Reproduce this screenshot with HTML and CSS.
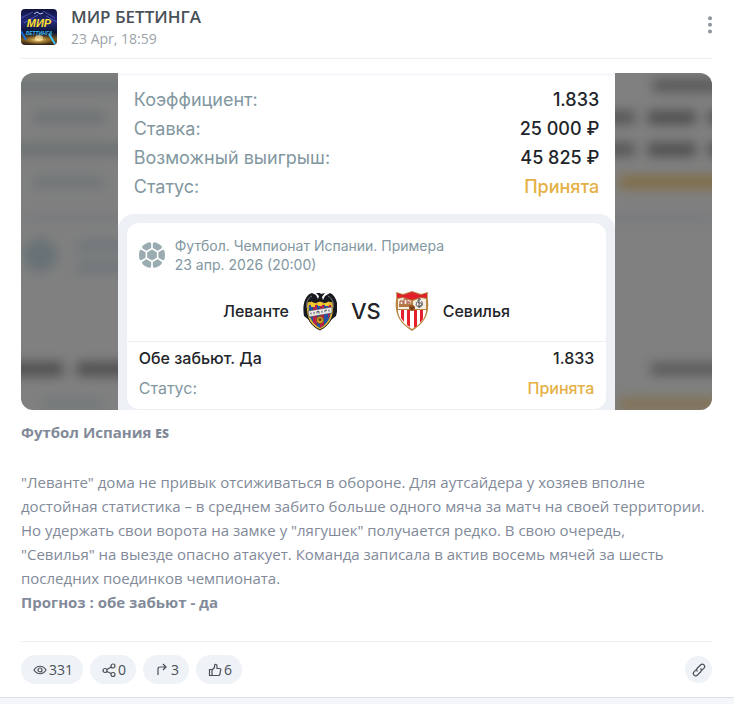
FILE: index.html
```html
<!DOCTYPE html>
<html lang="ru">
<head>
    <meta charset="UTF-8">
    <meta name="viewport" content="width=device-width, initial-scale=1.0">
    <title>МИР БЕТТИНГА</title>
    <link rel="stylesheet" href="styles.css">
</head>
<body>

<article class="post">
    <header class="post-header">
        <svg class="avatar" viewBox="0 0 36 36" role="img" aria-label="МИР БЕТТИНГА">
            <defs>
                <linearGradient id="avatarBg" x1="0" y1="0" x2="0" y2="1">
                    <stop offset="0" stop-color="#10143f"/>
                    <stop offset="0.35" stop-color="#252a78"/>
                    <stop offset="0.65" stop-color="#0b1534"/>
                    <stop offset="0.85" stop-color="#7d5a1c"/>
                    <stop offset="1" stop-color="#2a1e18"/>
                </linearGradient>
                <radialGradient id="avatarGlow">
                    <stop offset="0" stop-color="#ffe08a"/>
                    <stop offset="1" stop-color="#c98a20" stop-opacity="0"/>
                </radialGradient>
            </defs>
            <rect width="36" height="36" fill="url(#avatarBg)"/>
            <path d="M0 9L12 3M3 14L17 6M22 2L34 9M25 7L36 13" stroke="#5d6cd8" stroke-width="1" opacity="0.7"/>
            <path d="M13 5l3-2 3 2 3-1" stroke="#b9c6ff" stroke-width="1" fill="none"/>
            <ellipse cx="17" cy="31" rx="15" ry="5" fill="url(#avatarGlow)"/>
            <ellipse cx="18" cy="29" rx="4" ry="3" fill="#fff0b8" opacity="0.6"/>
            <path d="M28 25l6 10" stroke="#37c4ff" stroke-width="2"/>
            <path d="M0 22l5 9" stroke="#1d6bd6" stroke-width="2"/>
            <text class="avatar-top" x="18" y="18" text-anchor="middle">МИР</text>
            <text class="avatar-bottom" x="18" y="26" text-anchor="middle">БЕТТИНГА</text>
        </svg>
        <div class="post-info">
            <h1 class="post-title">МИР БЕТТИНГА</h1>
            <time class="post-date">23 Apr, 18:59</time>
        </div>
        <button class="menu-button" type="button" aria-label="Меню">
            <svg width="4" height="18" viewBox="0 0 4 18" fill="#8f959b">
                <circle cx="2" cy="2.2" r="2"/>
                <circle cx="2" cy="8.7" r="2"/>
                <circle cx="2" cy="15.5" r="2"/>
            </svg>
        </button>
    </header>

    <div class="media">
        <!-- Blurred left side -->
        <svg class="media-side" viewBox="0 0 97 337" preserveAspectRatio="none" aria-hidden="true">
            <defs>
                <filter id="blur" filterUnits="userSpaceOnUse" x="-30" y="-30" width="160" height="400" color-interpolation-filters="sRGB">
                    <feGaussianBlur stdDeviation="6"/>
                </filter>
            </defs>
            <g filter="url(#blur)">
                <rect x="-20" y="7" width="140" height="13" fill="#707577"/>
                <rect x="12" y="38" width="72" height="13" fill="#6e7375"/>
                <rect x="-20" y="70" width="140" height="13" fill="#6c7173"/>
                <rect x="12" y="103" width="72" height="13" fill="#717678"/>
                <rect x="0" y="141" width="120" height="7" fill="#77797d"/>
                <circle cx="19" cy="182" r="17" fill="#687175"/>
                <rect x="55" y="167" width="60" height="12" fill="#70777a"/>
                <rect x="55" y="188" width="60" height="12" fill="#70777a"/>
                <rect x="-20" y="289" width="62" height="14" fill="#4f4f51"/>
                <rect x="56" y="289" width="64" height="14" fill="#4f4f51"/>
                <rect x="22" y="325" width="60" height="12" fill="#73797b"/>
            </g>
        </svg>

        <div class="slip">
            <dl class="slip-summary">
                <div class="slip-row"><dt>Коэффициент:</dt><dd>1.833</dd></div>
                <div class="slip-row"><dt>Ставка:</dt><dd>25 000 ₽</dd></div>
                <div class="slip-row"><dt>Возможный выигрыш:</dt><dd>45 825 ₽</dd></div>
                <div class="slip-row"><dt>Статус:</dt><dd class="accepted">Принята</dd></div>
            </dl>

            <div class="event-wrap">
                <section class="event">
                    <div class="event-head">
                        <svg class="ball" width="26" height="26" viewBox="0 0 26 26">
                            <circle cx="13" cy="13" r="13" fill="#9aacb2"/>
                            <path d="M13 6.500l5.600 3.200v6.600L13 19.500l-5.600-3.200V9.700z" stroke="#fff" stroke-width="1.600" fill="none"/>
                            <path d="M13 6.500V0M18.600 9.700l6-3.500M18.600 16.300l6 3.500M13 19.500V26M7.400 16.300l-6 3.500M7.400 9.700l-6-3.500" stroke="#fff" stroke-width="1.600"/>
                            <path d="M11 0h4L13 2.500zM11 26h4L13 23.500zM23 4l2.300 4-3-.5zM3 4L.7 8l3-.5zM23 22l2.300-4-3 .5zM3 22L.7 18l3 .5z" fill="#fff"/>
                        </svg>
                        <p class="event-league">Футбол. Чемпионат Испании. Примера<br>23 апр. 2026 (20:00)</p>
                    </div>
                    <div class="teams">
                        <span class="team">Леванте</span>
                        <svg width="34" height="40" viewBox="0 0 34 40" role="img" aria-label="Леванте">
                            <path d="M1 25C-1 14 2 4 9 2l4 2 2 4 1-3-3-3h4l1 1 4-1-3 4 1 3 2-4 5-3c7 3 9 13 6 23l-5 4H6z" fill="#17191e"/>
                            <path d="M4 11l5-1 2 2 6-2 6 2 2-2 5 1c2 11-1 22-13 28C5 34 2 22 4 11z" fill="#e3b72c" stroke="#17191e"/>
                            <path d="M6 14h22c1 10-2 18-11 23C8 32 5 24 6 14z" fill="#2053a4"/>
                            <path d="M10 14h4v21l-4-4zM17 14h4v20l-4 3zM25 14h3c0 6-1 10-3 14z" fill="#bd1f4b"/>
                            <path d="M8 11l4 1v4H8zM15 11h4v4h-4zM22 12l4-1v4h-4z" fill="#f2cb33"/>
                            <path d="M5 20l24-4v6L6 26z" fill="#eceae6" stroke="#454545" stroke-width="0.6"/>
                            <path d="M8 23.5v-2M11 23v-2M14 22.5v-2h2v2M19 21.7v-2M22 21.2v-2h2M26 20.5v-2" stroke="#4d5360" fill="none"/>
                            <circle cx="17" cy="29" r="3.6" fill="#dda126" stroke="#6b4b15" stroke-width="0.8"/>
                            <path d="M15 28l2-1 2 1-1 2h-2z" fill="#6b4b15"/>
                            <path d="M4 17C3 11 5 7 9 5M30 17c1-6-1-10-5-12" stroke="#777d85" fill="none"/>
                        </svg>
                        <span class="versus">VS</span>
                        <svg width="34" height="40" viewBox="0 0 34 40" role="img" aria-label="Севилья">
                            <path d="M1 1l7 2 9-3 9 3 7-2c-1 6 1 10 0 17-1 10-8 17-16 22C9 35 2 28 1 18 0 11 2 7 1 1z" fill="#b98542"/>
                            <path d="M2 2l6 2 9-3 9 3 6-2v5l-6-1-9 3-9-3-6 1z" fill="#e0202b"/>
                            <path d="M3 8l5-1 8 3v8H3zM31 8l-5-1-8 3v8h13z" fill="#f5eee2"/>
                            <path d="M3 19h28c0 8-6 15-14 19C9 34 3 27 3 19z" fill="#fff"/>
                            <path d="M6 19h3v12l-3-4zM12 19h3v17l-3-2zM19 19h3v16l-3 2zM25 19h3v9l-3 4z" fill="#e5202c"/>
                            <path d="M5 16v-6h3v6M9 16V8h3v8M13 16v-5h2v5" stroke="#a7492e" fill="none"/>
                            <path d="M4 13h12v3H4z" fill="#b57843"/>
                            <path d="M26 8c-4 0-4 4-1 4s3 4-1 4M24 7v10M22 11c-2 4 0 5 3 4s3-4 1-5" stroke="#3f4248" stroke-width="0.9" fill="none"/>
                            <circle cx="17" cy="17" r="3" fill="#8e4e21"/>
                            <path d="M15 16l2 2 2-2" stroke="#4e2914" stroke-width="0.8" fill="none"/>
                        </svg>
                        <span class="team">Севилья</span>
                    </div>
                    <dl class="event-result">
                        <div class="event-row"><dt class="event-bet">Обе забьют. Да</dt><dd>1.833</dd></div>
                        <div class="event-row"><dt>Статус:</dt><dd class="accepted">Принята</dd></div>
                    </dl>
                </section>
            </div>
        </div>

        <!-- Blurred right side -->
        <svg class="media-side" viewBox="0 0 97 337" preserveAspectRatio="none" aria-hidden="true">
            <g filter="url(#blur)">
                <rect x="38" y="6" width="80" height="13" fill="#58585a"/>
                <rect x="-20" y="38" width="40" height="13" fill="#555557"/>
                <rect x="33" y="38" width="48" height="13" fill="#4d4d4f"/>
                <rect x="94" y="38" width="30" height="13" fill="#4b4b4d"/>
                <rect x="-20" y="70" width="40" height="13" fill="#555557"/>
                <rect x="33" y="70" width="48" height="13" fill="#4d4d4f"/>
                <rect x="94" y="70" width="30" height="13" fill="#4b4b4d"/>
                <rect x="4" y="103" width="114" height="12" fill="#806b40"/>
                <rect x="-20" y="141" width="120" height="7" fill="#77797d"/>
                <rect x="36" y="290" width="80" height="12" fill="#58585a"/>
                <rect x="4" y="325" width="114" height="12" fill="#827150"/>
            </g>
        </svg>
    </div>

    <div class="post-text">
        <strong>Футбол Испания <span class="flag">ES</span></strong><br>
        <br>
        "Леванте" дома не привык отсиживаться в обороне. Для аутсайдера у хозяев вполне<br>
        достойная статистика – в среднем забито больше одного мяча за матч на своей территории.<br>
        Но удержать свои ворота на замке у "лягушек" получается редко. В свою очередь,<br>
        "Севилья" на выезде опасно атакует. Команда записала в актив восемь мячей за шесть<br>
        последних поединков чемпионата.<br>
        <strong>Прогноз : обе забьют - да</strong>
    </div>

    <footer class="post-footer">
        <a class="pill" href="#" aria-label="Просмотры: 331">
            <svg width="14" height="14" viewBox="0 0 14 14">
                <path d="M1 7c3-5 9-5 12 0-3 5-9 5-12 0z"/>
                <circle cx="7" cy="7" r="2"/>
            </svg>
            331
        </a>
        <a class="pill" href="#" aria-label="Поделились: 0">
            <svg width="14" height="14" viewBox="0 0 14 14">
                <circle cx="3" cy="7.5" r="2"/>
                <circle cx="11" cy="3" r="2"/>
                <circle cx="11" cy="11.5" r="2"/>
                <path d="M4.8 6.5l4.400-2.500M4.800 8.500l4.400 2"/>
            </svg>
            0
        </a>
        <a class="pill" href="#" aria-label="Репосты: 3">
            <svg width="14" height="14" viewBox="0 0 14 14">
                <path d="M3 12V6Q3 4 5 4H11M8 1l3 3-3 3"/>
            </svg>
            3
        </a>
        <a class="pill" href="#" aria-label="Реакции: 6">
            <svg width="14" height="14" viewBox="0 0 14 14">
                <path d="M1.500 6.500H4V12.500H1.500zM4 7l2.500-2.500V2.500C6.500 1 9 1 9 3v2.500h2.500c1 0 1.500.700 1.200 1.500l-.9 4.500c-.2.700-.6 1-1.200 1H4"/>
            </svg>
            6
        </a>
        <a class="link-button" href="#" aria-label="Ссылка">
            <svg width="14" height="14" viewBox="0 0 14 14">
                <path d="M5.500 8.500c-1-1-1-2.500 0-3.500L8.500 2C11-.200 14 2.800 12 5.200L9.500 7.700"/>
                <path d="M8.500 5.500c1 1 1 2.500 0 3.500L5.500 12C3 14.200 0 11.200 2 8.800L4.500 6.300"/>
            </svg>
        </a>
    </footer>
</article>

</body>
</html>
```

FILE: styles.css
```css
body {
    margin: 0;
    background-color: #f4f6f9;
    font-family: "Open Sans", "Noto Sans", sans-serif;
    color: #828a99;
}
h1, p, dl, dd {
    margin: 0;
}
a {
    text-decoration: none;
}

/* Post card */
.post {
    background-color: #fff;
    border-bottom: 1px solid #d9e0e8;
    padding: 6px 22px 13px 21px;
}
.post-header {
    display: flex;
    align-items: flex-start;
    height: 52px;
    border-bottom: 1px solid #eef0f2;
}
.avatar {
    width: 36px;
    height: 36px;
    margin-top: 3px;
    border-radius: 4px;
}
.avatar-top {
    font: italic bold 11px "Liberation Sans", sans-serif;
    fill: #ffe12b;
}
.avatar-bottom {
    font: italic bold 5px "Liberation Sans", sans-serif;
    fill: #3cb9f0;
}
.post-info {
    flex: 1;
    margin-left: 14px;
}
.post-title {
    font-size: 17px;
    line-height: 22px;
    font-weight: 600;
    color: #495057;
}
.post-date {
    display: block;
    font-size: 14px;
    line-height: 22px;
    color: #9ba3ab;
}
.menu-button {
    display: flex;
    margin-top: 10px;
    padding: 0;
    border: 0;
    background: none;
    cursor: pointer;
}

/* Picture with blurred sides */
.media {
    display: flex;
    margin-top: 14px;
    border-radius: 12px;
    overflow: hidden;
    background-color: #808080;
}
.media-side {
    flex: 1 1 0;
    width: 0;
    min-width: 0;
    align-self: stretch;
    height: auto;
}
.slip {
    width: 72%;
    background-color: #fff;
    font-family: Inter, sans-serif;
    color: #222429;
}
.slip-summary {
    padding: 9px 16px 13px;
    border-top: 3px solid #f8f8fc;
}
.slip-row {
    display: flex;
    justify-content: space-between;
    font-size: 18px;
    line-height: 29px;
}
.slip-row dt, .event-row dt {
    color: #82979f;
}
.slip-row dd {
    font-weight: 500;
}
.slip-row .accepted, .event-row .accepted {
    color: #e5b045;
}
.event-wrap {
    padding: 9px 9px 1px;
    background-color: #edf0f5;
    border-radius: 16px 16px 0 0;
}
.event {
    background-color: #fff;
    border-radius: 12px;
}
.event-head {
    display: flex;
    align-items: center;
    gap: 10px;
    padding: 13px 12px 0;
}
.event-league {
    font-size: 14px;
    line-height: 19px;
    color: #82979f;
}
.teams {
    display: flex;
    align-items: center;
    justify-content: center;
    gap: 14px;
    padding: 17px 0 10px;
    border-bottom: 1px solid #eceef0;
}
.team {
    font-size: 16px;
    line-height: 20px;
    font-weight: 500;
}
.versus {
    font-size: 22px;
    line-height: 28px;
    font-weight: 500;
}
.event-result {
    padding: 1px 12px 6px;
}
.event-row {
    display: flex;
    justify-content: space-between;
    font-size: 16px;
    line-height: 30px;
}
.event-row .event-bet {
    color: #222429;
    font-weight: 500;
}
.event-row dd {
    font-weight: 500;
}

/* Text */
.post-text {
    padding: 10px 0 27px;
    font-size: 15px;
    line-height: 24px;
}
.flag {
    font-size: 12px;
    font-weight: 800;
}

/* Counters */
.post-footer {
    display: flex;
    align-items: center;
    gap: 7px;
    padding-top: 13px;
    border-top: 1px solid #eef0f2;
}
.pill, .link-button {
    display: flex;
    align-items: center;
    background-color: #eff2f7;
    color: #495057;
}
.pill {
    gap: 2px;
    padding: 0 10px 0 12px;
    border-radius: 15px;
    font-size: 14px;
    line-height: 29px;
}
.link-button {
    justify-content: center;
    width: 27px;
    height: 27px;
    margin-left: auto;
    border-radius: 50%;
}
.pill svg, .link-button svg {
    fill: none;
    stroke: #495057;
    stroke-width: 1.2;
}
```
